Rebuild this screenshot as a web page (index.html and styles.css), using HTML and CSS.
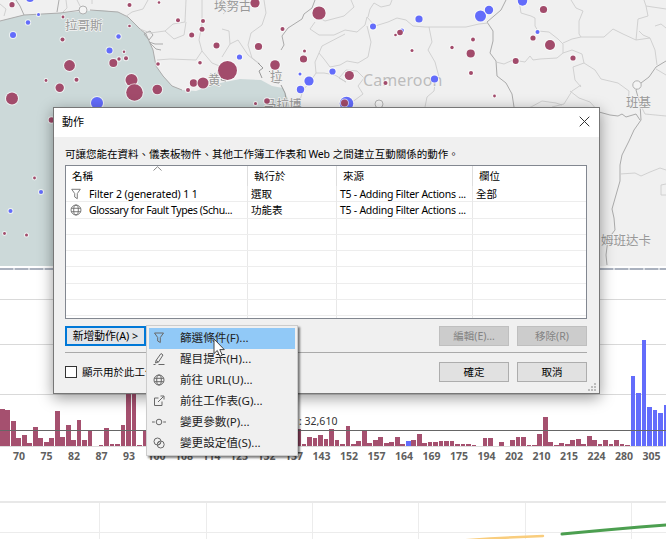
FILE: index.html
```html
<!DOCTYPE html>
<html lang="zh-Hant">
<head>
<meta charset="utf-8">
<title>動作</title>
<link rel="stylesheet" href="styles.css">
</head>
<body>
<div class="dashboard">
  <section class="map">
    <svg width="666" height="266" viewBox="0 0 666 266">
      <path class="sea" d="M0 21 L24 15 L60 13 L100 10 L118 12 L128 17 L140 29 L146 34 L153 50 L156 66 L163 76 L172 86 L182 90 L196 91 L215 84 L240 79 L261 80 L272 86 L283 88 L288 99 L290 110 V266 H0 Z"/>
      <g class="coast">
        <path d="M0 21 L24 15 L60 13 L82 10 M90 10 L118 12 L128 17 L140 29 L146 34 L153 50 L156 66 L163 76 L172 86 L182 90"/>
        <path d="M16 0 L20 6 L24 15 M59 0 L57 12 M144 34 l6 -3 l3 4 l-4 5 z M149 42 l6 2 l8 0 M150 43 l6 6 l5 1"/>
        <path d="M315 0 L312 8 L304 14 L302 19 L288 28 M288 28 L282 36 L284 45 L281 50"/>
        <path d="M506 0 L501 10 L487 22 L493 31 L493 41 L490 53 L496 61 L497 76 L506 83 L512 94 L514 107"/>
        <path d="M666 61 L656 67 L649 77 L641 83 L636 90 L640 104 L641 120 L634 130 L629 141 L622 155 L620 165 L620 181 L616 195 L612 209 L614 218 L615 230 L608 239 L606 255 L607 265"/>
        <path d="M599 112 L610 115 L618 116 L622 114 L626 117 L636 114 L640 120"/>
      </g>
      <g class="border">
        <path d="M0 4 L6 9 L4 16 M66 0 L67 8 L63 12 M77 0 L80 6 M125 17 L132 12 L143 9 L148 0 M92 0 L92 4"/>
        <path d="M140 29 L150 33 L165 31 L173 24 L185 22 L186 0 M165 31 L174 39 L184 35 L186 22"/>
        <path d="M202 0 L202 24 L199 40 L202 51 L196 60 L170 59 L157 60 M202 51 L212 63 L222 67"/>
        <path d="M222 29 L229 31 L230 44 L222 57 M230 44 L238 40 L248 55 L258 63 M222 0 L230 8 L223 14 M264 0 L266 13 L262 25 L251 33 L248 45 L252 58 L260 64"/>
        <path d="M351 0 L354 7 L344 16 L325 21 L314 15 M315 22 L310 29 L319 35 L334 35 L345 30 L357 32 L365 25 L367 17 L375 26 L388 22 L397 18 L406 20 L413 26 L425 27 L466 27 L479 24 L488 23"/>
        <path d="M368 17 L370 9 L374 3 M374 3 l7 4 l9 -2 l2 -5 M367 26 L371 42 L368 57 L358 63 L347 61 L340 65 L330 67 L324 59 L319 53 L322 46 L345 34"/>
        <path d="M319 53 L315 62 L316 73 L310 82 L303 90 L298 107 M316 73 L324 73 L335 75 L346 82 M346 82 L339 78 L346 70 L357 71 L364 78 L358 86 L363 94 L355 100 L348 105"/>
        <path d="M429 27 L432 42 L428 50 L435 62 L439 77 L435 84 L434 91 L427 97 L425 107"/>
        <path d="M519 0 L521 13 L531 16 L535 18 L535 26 L538 31 M571 0 L576 8 L583 11 L579 21 L579 34 L581 37 L604 37 L613 29 L623 34 L636 40 L638 19 L648 16 L646 6 L644 0 M646 6 L666 9"/>
        <path d="M538 31 L549 32 L558 39 L563 44 L563 53 L557 58 L540 59 L533 60 L530 56 L525 62 L513 60 L504 64 L496 62 M563 43 L572 39 L581 37 M563 53 L572 50 L582 54 L584 63 L573 67 L575 80 L581 87 M584 63 L595 70 L601 79 L618 83 L629 91 L628 107"/>
        <path d="M581 85 L572 91 L564 104 L552 107 M570 91 L579 98 L590 102 L599 112 M636 40 L650 38 L655 50 L657 65 M650 38 L643 35 L639 31 M655 26 L661 24 L666 28 M656 69 L666 75 M531 107 L542 101 L556 103 L562 105"/>
        <path d="M620 174 L635 173 L641 176 L650 172 L660 168 L666 170 M666 184 L661 185 L661 195 L666 195 M619 239 l5 5 l7 -1 l0 -7"/>
        <path d="M218 108 h70 M380 107 v-5 M513 107 L518 111 L531 107 M640 104 L645 114 L666 116"/>
      </g>
      <g class="city">
        <circle cx="83" cy="10" r="4"/><circle cx="379" cy="104" r="4"/><circle cx="637" cy="85" r="4.2"/>
      </g>
      <path class="delta" d="M208 82 l5 -4 l2 -5 l4 3 l5 -2 l-3 6 l5 1 M211 73 l2 10 M218 70 l0 12 M258 63 l5 5 l-4 3 l3 7 M269 71 l5 5 l-2 6 l7 1 l2 -8 M273 72 l8 3 M281 85 l4 8 l2 12"/>
      <g class="place">
        <text x="65" y="30">拉哥斯</text>
        <text x="214" y="11">埃努古</text>
        <text x="264" y="109">马拉博</text>
        <text x="626" y="107">班基</text>
        <text x="601" y="245">姆班达卡</text>
        <text x="208" y="85">黄</text>
        <text x="270" y="81">拉</text>
        <text class="country" x="363" y="86">Cameroon</text>
      </g>
      <g class="blue">
        <circle cx="30" cy="-2" r="4"/><circle cx="38.5" cy="14.5" r="1.5"/><circle cx="28" cy="22.5" r="2.2"/><circle cx="13" cy="35" r="3"/><circle cx="118.5" cy="36.5" r="2.2"/><circle cx="109.5" cy="50.5" r="3"/><circle cx="97" cy="103" r="6"/>
        <circle cx="239.5" cy="57" r="2.6"/><circle cx="300" cy="74" r="1.5"/><circle cx="309" cy="81" r="4.6"/><circle cx="300.5" cy="89.5" r="3.7"/><circle cx="332.5" cy="71.5" r="3.1"/><circle cx="346.5" cy="103.5" r="6.8"/><circle cx="373" cy="26.5" r="3"/><circle cx="419" cy="19" r="3.6"/><circle cx="402" cy="30.5" r="2"/><circle cx="434.5" cy="79" r="3.6"/>
        <circle cx="480.5" cy="16" r="5.5"/><circle cx="489" cy="10" r="4.2"/><circle cx="522.5" cy="1" r="4.7"/><circle cx="537.5" cy="32" r="2"/>
        <circle cx="41" cy="192" r="2"/><circle cx="10.5" cy="211" r="2"/>
      </g>
      <g class="red">
        <circle cx="12" cy="4.7" r="2.6"/><circle cx="129.5" cy="5" r="2"/><circle cx="63" cy="17" r="1.4"/><circle cx="129.5" cy="26" r="1.3"/><circle cx="62.5" cy="39.5" r="2"/><circle cx="69.5" cy="65.5" r="5.4"/><circle cx="46" cy="80.5" r="1.4"/><circle cx="76.5" cy="79.7" r="2"/><circle cx="59.7" cy="87.7" r="4.2"/><circle cx="12" cy="98.5" r="6"/><circle cx="113.3" cy="63" r="4"/><circle cx="119" cy="59" r="1.7"/><circle cx="126" cy="58.3" r="2"/><circle cx="124" cy="51.7" r="1.2"/><circle cx="131.5" cy="80" r="6"/><circle cx="134.5" cy="92.5" r="8.3"/><circle cx="157.3" cy="89.5" r="4.8"/><circle cx="158" cy="64" r="1.8"/><circle cx="159" cy="2.5" r="1.3"/><circle cx="178" cy="20.3" r="2"/><circle cx="203" cy="21" r="2"/><circle cx="202" cy="29.3" r="2.5"/><circle cx="191.7" cy="35" r="2.5"/><circle cx="216.5" cy="45.5" r="3"/><circle cx="200" cy="62.7" r="1.8"/><circle cx="188" cy="90" r="2"/><circle cx="193.5" cy="83" r="3.7"/><circle cx="203" cy="83" r="5.5"/>
        <circle cx="227.5" cy="70.5" r="9.5"/><circle cx="255" cy="3" r="4.6"/><circle cx="282.5" cy="29" r="2"/><circle cx="319" cy="13" r="6.6"/><circle cx="258.5" cy="46.5" r="3.6"/><circle cx="275" cy="65" r="4.8"/><circle cx="304.5" cy="51" r="1.5"/><circle cx="303.5" cy="59" r="3.6"/><circle cx="349.3" cy="75.5" r="4.6"/><circle cx="267" cy="101" r="2.8"/><circle cx="255.5" cy="103.5" r="1.5"/><circle cx="344.5" cy="103" r="3.5"/><circle cx="400" cy="32.5" r="2.8"/><circle cx="395.5" cy="35" r="1.3"/><circle cx="412" cy="50.5" r="1.5"/><circle cx="385.5" cy="83" r="2"/>
        <circle cx="452" cy="47.5" r="1.7"/><circle cx="473" cy="39.5" r="1.9"/><circle cx="470.7" cy="53.5" r="4.1"/><circle cx="471" cy="73" r="2"/><circle cx="494.5" cy="96" r="1.4"/><circle cx="543.5" cy="9.5" r="3.6"/><circle cx="533" cy="38" r="2.6"/><circle cx="550" cy="45" r="5"/><circle cx="515.7" cy="61" r="3"/><circle cx="573" cy="58" r="2.6"/>
        <circle cx="51.5" cy="120" r="2.8"/><circle cx="34.5" cy="178" r="1.4"/><circle cx="4.5" cy="233.5" r="1.4"/><circle cx="26.5" cy="235" r="1.5"/>
      </g>
    </svg>
  </section>
  <div class="divider"></div>
  <section class="chart">
    <div class="bars" id="bars"></div>
    <div class="average">: 32,610</div>
    <div class="axis" id="axis"></div>
  </section>
  <section class="trend">
    <svg width="666" height="38" viewBox="0 0 666 38">
      <path class="grid-line" d="M99.5 1V38M206.5 1V38M312.5 1V38M418.5 1V38M525.5 1V38M631.5 1V38M0 31.5H666"/>
      <path class="grid-top" d="M0 1H666"/>
      <path class="yellow" d="M455 40 L490 37.5 L520 36 L543 35"/>
      <path class="green" d="M562 33 L600 29.5 L640 26 L668 23.8"/>
    </svg>
  </section>
</div>

<div class="dialog">
  <div class="titlebar">
    <span>動作</span>
    <svg width="11" height="11" viewBox="0 0 11 11"><path d="M.7 .7L10.3 10.3M10.3 .7L.7 10.3"/></svg>
  </div>
  <div class="content">
    <p class="intro"><span>可讓您能在資料、儀表板物件、其他工作簿工作表和</span> <span class="web">Web</span> <span>之間建立互動關係的動作。</span></p>
    <div class="table">
      <svg class="sort" width="9" height="5" viewBox="0 0 9 5"><path d="M.5 4.5L4.5 .7L8.5 4.5"/></svg>
      <div class="row head"><div>名稱</div><div>執行於</div><div>來源</div><div>欄位</div></div>
      <div class="row">
        <div class="name"><svg class="icon" width="12" height="12" viewBox="0 0 14 14"><path d="M2 1.5H12L8.5 6.5V12.5L5.5 10.5V6.5Z"/></svg><span class="latin wide">Filter 2 (generated) 1 1</span></div>
        <div>選取</div><div class="latin">T5 - Adding Filter Actions ...</div><div>全部</div>
      </div>
      <div class="row">
        <div class="name"><svg class="icon" width="12" height="12" viewBox="0 0 14 14"><circle cx="7" cy="7" r="5.8"/><ellipse cx="7" cy="7" rx="2.7" ry="5.8"/><path d="M1.5 5H12.5M1.5 9H12.5"/></svg><span class="latin tight">Glossary for Fault Types (Schu...</span></div>
        <div>功能表</div><div class="latin">T5 - Adding Filter Actions ...</div><div></div>
      </div>
      <div class="row"><div></div><div></div><div></div><div></div></div>
      <div class="row"><div></div><div></div><div></div><div></div></div>
      <div class="row"><div></div><div></div><div></div><div></div></div>
      <div class="row"><div></div><div></div><div></div><div></div></div>
      <div class="row"><div></div><div></div><div></div><div></div></div>
      <div class="row"><div></div><div></div><div></div><div></div></div>
      <div class="row"><div></div><div></div><div></div><div></div></div>
    </div>
    <div class="actions">
      <button class="add">新增動作(A) &gt;</button>
      <button class="disabled">編輯(E)…</button>
      <button class="disabled">移除(R)</button>
    </div>
    <div class="footer">
      <span class="checkbox"></span><span class="check-label">顯示用於此工作</span>
      <button>確定</button>
      <button>取消</button>
    </div>
  </div>
  <svg class="grip" width="9" height="9" viewBox="0 0 9 9"><path d="M6 0h2v2h-2zM3 3h2v2h-2zM6 3h2v2h-2zM0 6h2v2h-2zM3 6h2v2h-2zM6 6h2v2h-2z"/></svg>
</div>

<div class="menu">
  <div class="item active"><svg class="icon" width="14" height="14" viewBox="0 0 14 14"><path d="M2.5 2H11.5L8.3 6.5V11.5L5.7 10V6.5Z"/></svg><span>篩選條件(F)...</span></div>
  <div class="item"><svg class="icon" width="14" height="14" viewBox="0 0 14 14"><path d="M9 1.5L11 3L6.5 10L3.5 11L4 8.5ZM4 8.5L6.5 10M1.5 12.5H3.5M6.5 12.5H12.5"/></svg><span>醒目提示(H)...</span></div>
  <div class="item"><svg class="icon" width="14" height="14" viewBox="0 0 14 14"><circle cx="7" cy="7" r="5"/><ellipse cx="7" cy="7" rx="2.3" ry="5"/><path d="M2.3 5.3H11.7M2.3 8.7H11.7"/></svg><span>前往 URL(U)...</span></div>
  <div class="item"><svg class="icon" width="14" height="14" viewBox="0 0 14 14"><path d="M6.5 4H2.5V11.5H10V7.5M6 8L11.5 2.5M8.5 2H12V5.5"/></svg><span>前往工作表(G)...</span></div>
  <div class="item"><svg class="icon" width="14" height="14" viewBox="0 0 14 14"><circle cx="7" cy="7" r="2.8"/><path d="M0 7H2.8M11.2 7H14"/></svg><span>變更參數(P)...</span></div>
  <div class="item"><svg class="icon" width="14" height="14" viewBox="0 0 14 14"><circle cx="5.5" cy="5.5" r="3.5"/><circle cx="8.7" cy="8.5" r="3.5"/><path d="M5.5 7.5L8 5.2M6.5 9L9 6.8"/></svg><span>變更設定值(S)...</span></div>
</div>
<svg class="cursor" width="13" height="20" viewBox="0 0 13 20"><path d="M1 1V15.5L4.3 12.5L6.8 18.3L9.3 17.2L6.8 11.6H11.3Z"/></svg>
<script src="chart.js"></script>
</body>
</html>
```
FILE: styles.css
```css
* { box-sizing: border-box; }
body {
  margin: 0;
  width: 666px;
  height: 539px;
  overflow: hidden;
  position: relative;
  background: #fff;
  color: #000;
  font: 10.5px/16px "Noto Sans", "Noto Sans CJK TC", sans-serif;
}
svg { display: block; fill: none; }
.dashboard { display: flex; flex-direction: column; width: 666px; height: 539px; overflow: hidden; }
.map { height: 266px; background: #f0f0f0; }
.sea { fill: #ccd9d9; }
.coast { stroke: #ababab; stroke-width: 1; }
.border { stroke: #cdcdcd; stroke-width: .9; }
.delta { stroke: #999; stroke-width: 1; }
.city { fill: #f4f4f4; stroke: #aaa; stroke-width: .9; }
.place { fill: #999; font: 12.5px "Noto Sans CJK SC", sans-serif; stroke: #f2f2f2; stroke-width: 1.5px; paint-order: stroke; }
.place .country { font: 16px "Noto Sans", sans-serif; fill: #bcbcbc; letter-spacing: .1px; }
.blue { fill: #636cfb; }
.red { fill: #a24b6b; }
.blue circle, .red circle { stroke: rgba(255, 255, 255, .65); stroke-width: 2; paint-order: stroke; }
.divider {
  height: 2px;
  margin: 2px 0 1px;
  background: repeating-linear-gradient(90deg, #aab1be 0 13px, #d7dbe1 13px 15px);
}
.map { box-shadow: 0 -1px 0 #f0f0f0; }
.chart {
  position: relative;
  height: 230px;
  background:
    linear-gradient(#d9d9d9, #d9d9d9) 0 28px / 100% 1px no-repeat,
    linear-gradient(#d9d9d9, #d9d9d9) 0 73px / 100% 1px no-repeat,
    linear-gradient(#d9d9d9, #d9d9d9) 0 123px / 100% 1px no-repeat;
}
.bars { display: flex; align-items: flex-end; height: 176px; width: 675px; border-bottom: 1px solid #ddd; }
.bar { flex: 0 0 4.7px; margin-right: .8px; background: #a5506f; }
.bar.cool { background: #636cfb; }
.chart::after { content: ""; position: absolute; left: 0; right: 0; top: 159px; height: 1px; background: #666; }
.average { position: absolute; left: 299px; top: 142px; font-size: 10.5px; color: #333; }
.axis { display: flex; margin-left: 5.2px; width: 661px; padding-top: 1px; font: bold 10.5px/16px "Open Sans", sans-serif; color: #606060; }
.axis span { flex: 0 0 27.5px; text-align: center; }
.trend { height: 38px; }
.grid-line { stroke: #ececec; }
.grid-top { stroke: #e8e8e8; stroke-width: 2; }
.yellow { stroke: #f9cd7d; stroke-width: 2.5; stroke-linecap: round; }
.green { stroke: #4c9f50; stroke-width: 3; stroke-linecap: round; }

.dialog {
  position: absolute;
  left: 53px;
  top: 107px;
  width: 547px;
  height: 287px;
  border: 1px solid #777;
  background: #f0f0f0;
  box-shadow: 0 4px 14px rgba(0, 0, 0, .4);
}
.titlebar { display: flex; justify-content: space-between; align-items: center; height: 29px; padding: 0 9px 2px 8px; background: #fff; font-size: 11px; }
.titlebar svg { stroke: #333; stroke-width: 1; }
.content { padding: 8px 12px 0 11px; }
.intro { margin: 0 0 3px; height: 17px; display: flex; align-items: center; white-space: nowrap; }
.intro .web { margin: 0 3px 0 2px; letter-spacing: -.2px; }
.table { position: relative; height: 154px; overflow: hidden; border: 1px solid #828790; background: #fff; }
.sort { position: absolute; left: 87px; top: 0; stroke: #888; }
.row { display: grid; grid-template-columns: 182px 89px 136px 1fr; height: 16.25px; border-bottom: 1px solid #ededed; white-space: nowrap; line-height: 16px; }
.row.head { height: 20px; line-height: 21px; border: 0; }
.row > div { padding-left: 3px; border-right: 1px solid #e8e8e8; }
.row > div:last-child { border-right: 0; }
.row.head > div { padding-left: 6px; border-right-color: #dedede; }
.row > .name { display: flex; align-items: center; gap: 7px; padding-left: 4px; }
.icon { flex: none; stroke: #686868; stroke-width: 1; }
.latin { font-size: 10.5px; letter-spacing: -.26px; }
.latin.wide { letter-spacing: -.1px; }
.latin.tight { letter-spacing: -.38px; }
.actions { display: flex; gap: 8px; height: 34px; padding-top: 7px; border-bottom: 1px solid #aaa; }
button { width: 70px; height: 20px; padding: 0; border: 1px solid #adadad; background: #e1e1e1; color: #000; font: inherit; line-height: 16px; white-space: nowrap; }
button.add { width: 81px; margin-right: auto; border: 2px solid #0078d7; background: #e1e5ea; font-size: 10.8px; }
button.disabled { border-color: #bfbfbf; background: #ccc; color: #838383; }
.footer { display: flex; align-items: center; gap: 8px; margin-top: 9px; height: 20px; }
.checkbox { width: 12px; height: 12px; border: 1px solid #333; background: #fff; }
.check-label { margin-right: auto; margin-left: -3px; }
.grip { position: absolute; right: 2px; bottom: 1px; fill: #bcbcbc; }

.menu {
  position: absolute;
  left: 146px;
  top: 325px;
  width: 152px;
  height: 131px;
  padding: 2px;
  border: 1px solid #ccc;
  background: #f0f0f0;
  box-shadow: 2px 2px 2px rgba(0, 0, 0, .5);
  font-size: 11.6px;
}
.item { display: flex; align-items: center; height: 21px; padding: 0 0 2px 3px; gap: 14px; white-space: nowrap; color: #222; }
.item.active { background: #91c9f7; width: 146px; }
.cursor { position: absolute; left: 213px; top: 338px; fill: #fff; stroke: #444; stroke-width: 1; }
```
FILE: chart.js
```js
const heights = [
  37, 36, 25, 8, 11, 3, 19, 8, 4, 8, 35, 9, 21, 6, 26, 6, 16, 0, 1, 18, 2, 2, 21, 60, 60, 1, 16,
  0, 0, 0, 0, 0, 0, 0, 0, 0, 0, 0, 0, 0, 0, 0, 0, 0, 0, 0, 0, 0, 0, 0, 0, 0, 0, 0,
  17, 2, 9, 8, 11, 7, 17, 6, 2, 20, 2, 5, 16, 3, 6, 9, 3, 4, 9, 2, 5, 6, 12, 3, 4, 4, 5, 5, 5,
  2, 2, 2, 1, 0, 8, 8, 0, 4, 0, 6, 9, 9, 1, 1, 12, 29, 4, 1, 3, 2, 6, 7, 2, 10, 6, 2, 6, 2, 6, 2, 1,
  70, 53, 106, 39, 36, 33, 41
];
const labels = [70, 75, 82, 87, 93, 100, 108, 114, 123, 132, 137, 143, 152, 157, 164, 169, 175, 194, 202, 210, 215, 224, 280, 305];

const bars = document.getElementById("bars");
heights.forEach((h, i) => {
  const bar = document.createElement("div");
  bar.className = i === 74 || i >= 115 ? "bar cool" : "bar";
  bar.style.height = h + "px";
  bars.append(bar);
});

const axis = document.getElementById("axis");
labels.forEach((n) => {
  const tick = document.createElement("span");
  tick.textContent = n;
  axis.append(tick);
});
```
